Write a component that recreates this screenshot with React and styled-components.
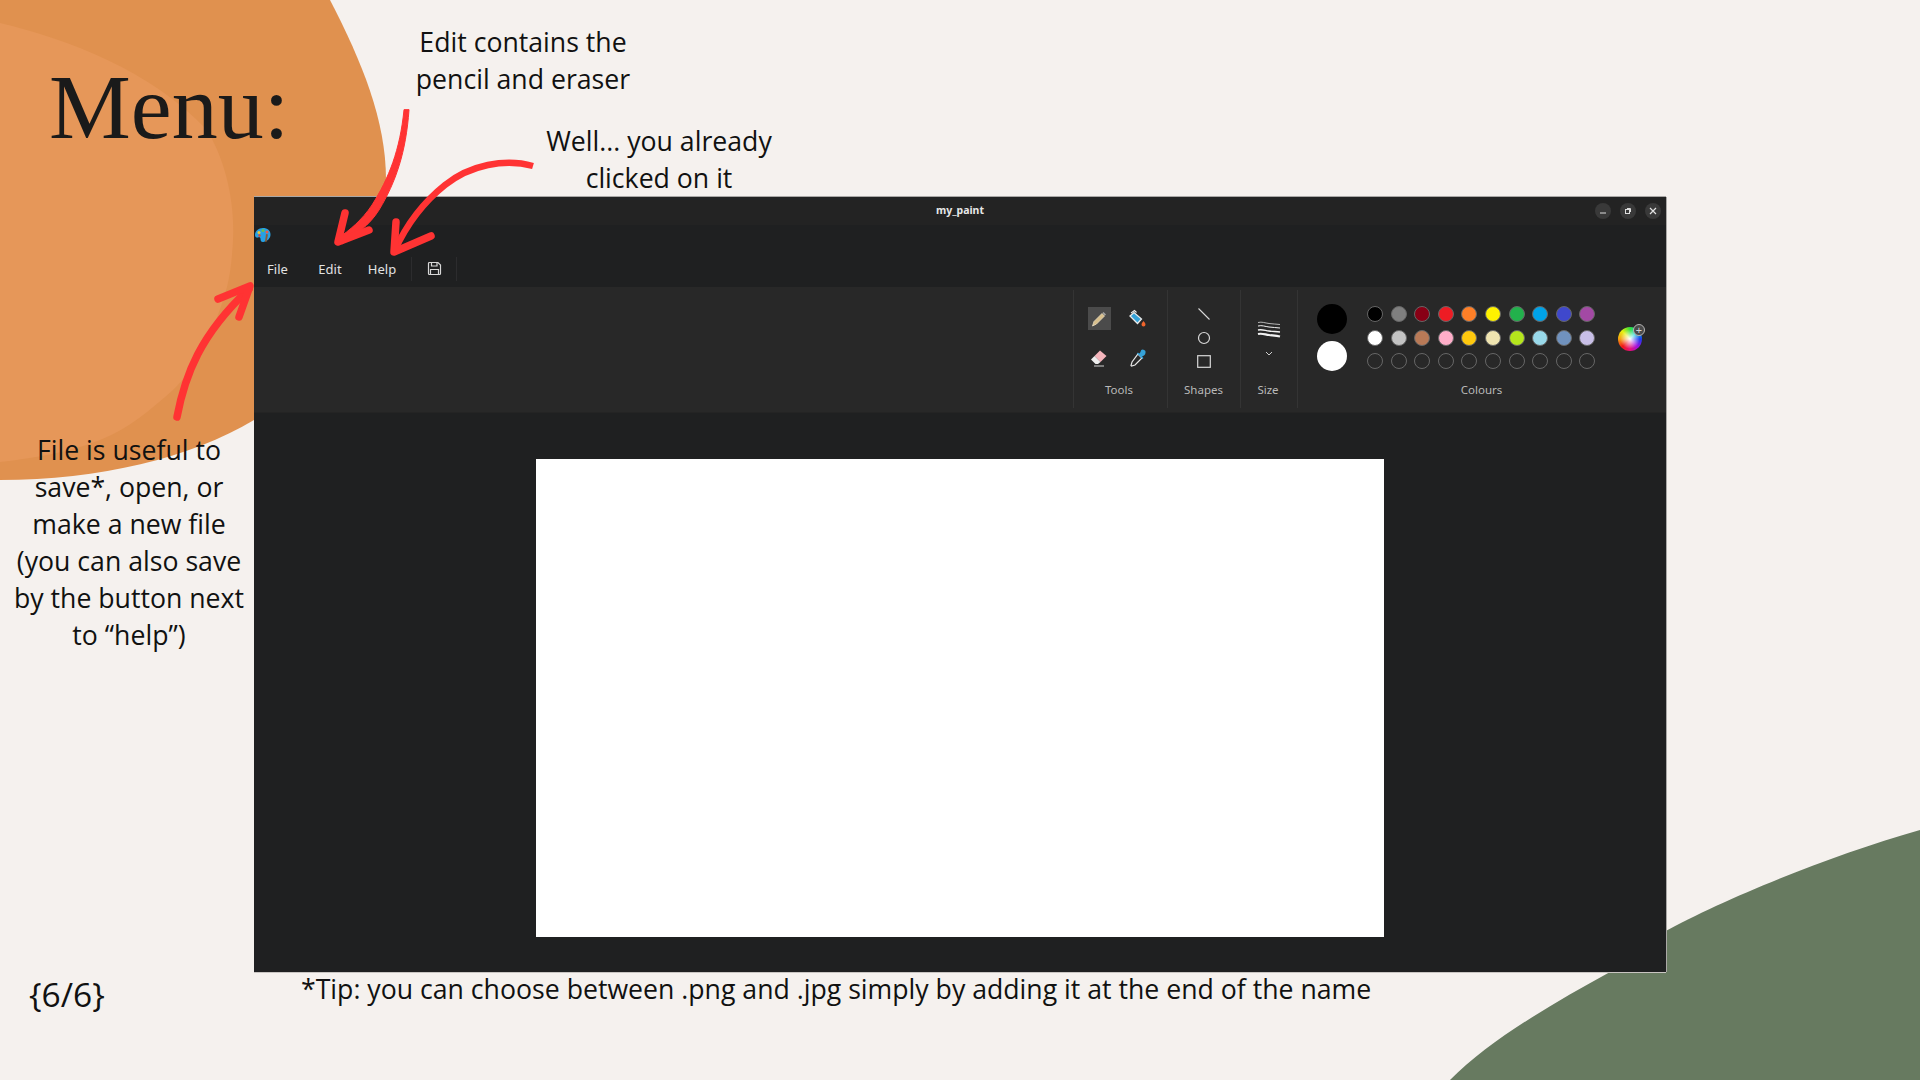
import React from "react";
import styled, { createGlobalStyle } from "styled-components";

const Global = createGlobalStyle`
  html, body {
    margin: 0;
    padding: 0;
    background: #f5f1ee;
  }
`;

const Slide = styled.div`
  position: relative;
  width: 1920px;
  height: 1080px;
  overflow: hidden;
  background: #f5f1ee;
  font-family: "Open Sans", "Noto Sans", sans-serif;
  color: #111;
`;

const Backdrop = styled.svg`
  position: absolute;
  left: 0;
  top: 0;
`;

const Arrows = styled.svg`
  position: absolute;
  left: 0;
  top: 0;
  z-index: 3;
  pointer-events: none;
`;

const Title = styled.h1`
  position: absolute;
  left: 49px;
  top: 49px;
  margin: 0;
  font-family: "Liberation Serif", serif;
  font-weight: 400;
  font-size: 92px;
  line-height: 116px;
  color: #1a1a1a;
`;

const Note = styled.div`
  position: absolute;
  left: ${(p) => p.$cx - 200}px;
  top: ${(p) => p.$top}px;
  width: 400px;
  text-align: center;
  font-size: 26.67px;
  line-height: 37px;
  z-index: 2;
`;

const Tip = styled.div`
  position: absolute;
  left: 301px;
  top: 971px;
  font-size: 26.67px;
  line-height: 36px;
  white-space: nowrap;
`;

const Pager = styled.div`
  position: absolute;
  left: 29px;
  top: 972px;
  font-size: 33.5px;
  line-height: 44px;
`;

const Window = styled.div`
  position: absolute;
  left: 254px;
  top: 197px;
  width: 1412px;
  height: 775px;
  display: flex;
  flex-direction: column;
  background: #1f2021;
  box-shadow: 0 -1px 0 #aaa8a6, 1px 0 0 #aaa8a6, 0 1px 0 #c9c5c2;
  font-family: "Noto Sans", "Open Sans", sans-serif;
`;

const TitleBar = styled.div`
  position: relative;
  height: 28px;
  flex: none;
  display: flex;
  align-items: center;
  justify-content: flex-end;
  gap: 9px;
  padding-right: 5px;
  background: #232323;
`;

const WindowName = styled.span`
  position: absolute;
  left: 0;
  right: 0;
  top: 6px;
  line-height: 15px;
  text-align: center;
  font-size: 10.5px;
  font-weight: 700;
  color: #e8e8e8;
`;

const WindowButton = styled.span`
  width: 16px;
  height: 16px;
  border-radius: 50%;
  background: #393939;
  display: flex;
  align-items: center;
  justify-content: center;
`;

const IconRow = styled.div`
  height: 25px;
  flex: none;
  padding-top: 1px;
  box-sizing: border-box;
  display: flex;
  background: #1f2021;
`;

const MenuRow = styled.div`
  height: 37px;
  flex: none;
  display: flex;
  align-items: center;
  background: #1f2021;
`;

const MenuItem = styled.span`
  width: ${(p) => p.$w}px;
  text-align: center;
  font-size: 13px;
  color: #e2e2e2;
`;

const MenuSep = styled.span`
  width: 1px;
  height: 24px;
  background: #2c2c2e;
  margin-left: ${(p) => p.$ml || 0}px;
`;

const SaveButton = styled.span`
  width: 44px;
  display: flex;
  justify-content: center;
`;

const Ribbon = styled.div`
  height: 125px;
  flex: none;
  display: flex;
  justify-content: flex-end;
  background: #282828;
`;

const Group = styled.div`
  position: relative;
  width: ${(p) => p.$w}px;
  box-sizing: border-box;
  display: flex;
  flex-direction: column;
  align-items: center;
  padding-top: 13px;
  &::before {
    content: "";
    position: absolute;
    left: 0;
    top: 3px;
    bottom: 4px;
    width: 1px;
    background: #343434;
  }
`;

const GroupBody = styled.div`
  height: 76px;
  margin: ${(p) => p.$margin || 0};
  display: flex;
  align-items: center;
  justify-content: center;
`;

const GroupLabel = styled.div`
  margin-top: 6px;
  margin-right: ${(p) => p.$mr || 0}px;
  height: 16px;
  line-height: 16px;
  font-size: 11.5px;
  color: #b9b9b9;
`;

const ToolGrid = styled.div`
  display: grid;
  grid-template-columns: 23px 23px;
  grid-auto-rows: 23px;
  gap: 16px;
`;

const ToolButton = styled.span`
  display: flex;
  align-items: center;
  justify-content: center;
  background: ${(p) => (p.$active ? "#4b4b4b" : "transparent")};
`;

const ShapeStack = styled.div`
  display: flex;
  flex-direction: column;
  align-items: center;
  gap: 10px;
  margin-top: -2px;
`;

const SizeStack = styled.div`
  display: flex;
  flex-direction: column;
  align-items: center;
  gap: 12px;
`;

const ColourRow = styled.div`
  width: 100%;
  height: 76px;
  display: flex;
  align-items: center;
  padding-left: 20px;
  box-sizing: border-box;
`;

const ActiveColours = styled.div`
  display: flex;
  flex-direction: column;
  gap: 7px;
  margin: -2px 20px 0 0;
`;

const ActiveSwatch = styled.span`
  display: block;
  width: 30px;
  height: 30px;
  border-radius: 50%;
  background: ${(p) => p.$c};
`;

const Palette = styled.div`
  display: grid;
  grid-template-columns: repeat(10, 16px);
  grid-auto-rows: 16px;
  gap: 7.4px 7.6px;
  margin-top: -1px;
`;

const Swatch = styled.span`
  display: block;
  box-sizing: border-box;
  width: 16px;
  height: 16px;
  border-radius: 50%;
  border: 1px solid #666;
  background: ${(p) => p.$c || "transparent"};
`;

const Wheel = styled.span`
  position: relative;
  display: block;
  width: 24px;
  height: 24px;
  margin: 2px 0 0 22.6px;
  border-radius: 50%;
  background: radial-gradient(circle, #fff 0%, rgba(255, 255, 255, 0) 58%),
    conic-gradient(#2fe03a, #12d8d8, #1a3cf0, #a010e0, #e81078, #f01818, #f5a010, #e8f010, #2fe03a);
`;

const WheelPlus = styled.span`
  position: absolute;
  right: -3px;
  top: -3px;
  width: 12px;
  height: 12px;
  box-sizing: border-box;
  border-radius: 50%;
  border: 1px solid #b5b5b5;
  background: #4a4a4a;
  color: #d5d5d5;
  font-size: 11px;
  line-height: 9px;
  text-align: center;
`;

const CanvasArea = styled.div`
  flex: 1;
  display: flex;
  justify-content: center;
  padding-top: 46px;
  background: #1f2021;
  border-top: 1px solid #242424;
`;

const Sheet = styled.div`
  width: 848px;
  height: 478px;
  background: #fff;
`;

const COLOURS = [
  "#000000", "#7f7f7f", "#880015", "#ed1c24", "#ff7f27", "#fff200", "#22b14c", "#00a2e8", "#3f48cc", "#a349a4",
  "#ffffff", "#c3c3c3", "#b97a57", "#ffaec9", "#ffc90e", "#efe4b0", "#b5e61d", "#99d9ea", "#7092be", "#c8bfe7",
];

const PaletteIcon = () => (
  <svg width="18" height="18" viewBox="0 0 18 18">
    <path d="M9 2C4.500 2 1 5 1 9c0 2.200 1.800 3 3 2.500s2.500-.5 2.500 1.500c0 2 1 3.500 3 3 4-1 7-3.500 7-7.500C16.500 4.500 13.500 2 9 2z" fill="#26a0e4" />
    <circle cx="5" cy="6.500" r="1.500" fill="#e8c63a" />
    <circle cx="9" cy="4.500" r="1.500" fill="#6cc04a" />
    <circle cx="13" cy="6" r="1.500" fill="#e85a4a" />
    <circle cx="5.500" cy="9.500" r="1.200" fill="#d8463c" />
    <path d="M12 8l2 .5-1.500 7.500-1.500-.5z" fill="#8a5a34" />
  </svg>
);

const SaveIcon = () => (
  <svg width="15" height="15" viewBox="0 0 15 15" fill="none" stroke="#d8d8d8" strokeWidth="1.200">
    <path d="M1.500 2.500a1 1 0 0 1 1-1h8.500l2.500 2.500v8.500a1 1 0 0 1-1 1h-10a1 1 0 0 1-1-1z" />
    <path d="M4.500 1.500v3.500h5.500V1.500M3.500 13.500V8.500h8v5" />
  </svg>
);

const PencilIcon = () => (
  <svg width="18" height="18" viewBox="0 0 18 18">
    <path d="M4 11.500L12 3.500l2.500 2.500-8 8L2.500 16z" fill="#d9c08c" stroke="#e8dcc0" strokeWidth=".8" />
    <path d="M12.500 3l1-1 2.500 2.500-1 1z" fill="#a8a8a8" />
  </svg>
);

const FillIcon = () => (
  <svg width="20" height="20" viewBox="0 0 20 20">
    <path d="M2 7l4-3.500 7.500 6.500-4 4.500z" fill="#35a2d8" stroke="#eaeaea" strokeWidth="1.300" />
    <path d="M3 4l3.500-2.500 2 2" fill="none" stroke="#eaeaea" strokeWidth="1.100" />
    <path d="M15.500 12c1 1.300 2 2.300 2 3.500a2 2 0 0 1-4 0c0-1.200 1-2.200 2-3.500z" fill="#f0642c" />
  </svg>
);

const EraserIcon = () => (
  <svg width="20" height="20" viewBox="0 0 20 20">
    <path d="M11 2.500L17.500 8 11.500 14 5.500 8z" fill="#f5b5bc" />
    <path d="M5.500 8L2 11.500 6.500 16h2.500l2.500-2z" fill="#eeeeee" />
    <path d="M5 18h10" stroke="#cfcfcf" strokeWidth="1" />
  </svg>
);

const DropperIcon = () => (
  <svg width="20" height="20" viewBox="0 0 20 20">
    <path d="M10 6l4 4-7 7-3.500 1L3 17.500l1-3.500z" fill="#2a2a2a" stroke="#e8e8e8" strokeWidth="1.200" />
    <path d="M9 5.500l5.500 5.500 1-1L14 8.500c1.500-.5 3.500-1.500 3.500-3.800a2.500 2.500 0 0 0-5-1c-.3 1-1 1.800-1.700 1.800L10 4.500z" fill="#35a2d8" />
  </svg>
);

const SizeIcon = () => (
  <svg width="24" height="18" viewBox="0 0 24 18" fill="none" stroke="#f2f2f2">
    <path d="M1 1.500c4-1 7 .5 11 1s7 .5 11 1" strokeWidth=".7" />
    <path d="M1 5c4-1 7 .5 11 1s7 .5 11 1" strokeWidth="1" />
    <path d="M1 9c4-1 7 .5 11 1s7 .5 11 1" strokeWidth="1.400" />
    <path d="M1 13c4-1 7 .5 11 1s7 .5 11 1.500" strokeWidth="2.200" />
  </svg>
);

export default function App() {
  return (
    <Slide>
      <Global />
      <Backdrop width="1920" height="1080" viewBox="0 0 1920 1080">
        <path d="M0 0H330C362 62 386 120 386 180C386 300 340 365 254 420C190 458 100 480 0 480Z" fill="#e0914f" />
        <path d="M0 23C70 40 150 70 207 130C225 160 235 200 233 240C232 260 230 275 227 287C215 330 195 370 173 390C150 410 130 428 100 440C70 452 35 458 0 462Z" fill="#e69759" />
        <path d="M1920 830C1780 870 1620 945 1610 972C1550 1005 1490 1040 1450 1080H1920Z" fill="#677a60" />
      </Backdrop>

      <Title>Menu:</Title>

      <Note $cx={523} $top={23}>
        Edit contains the
        <br />
        pencil and eraser
      </Note>
      <Note $cx={659} $top={122}>
        Well... you already
        <br />
        clicked on it
      </Note>
      <Note $cx={129} $top={431}>
        File is useful to
        <br />
        save*, open, or
        <br />
        make a new file
        <br />
        (you can also save
        <br />
        by the button next
        <br />
        to “help”)
      </Note>

      <Window>
        <TitleBar>
          <WindowName>my_paint</WindowName>
          <WindowButton>
            <svg width="8" height="8" viewBox="0 0 8 8"><path d="M1 6h6" stroke="#ddd" strokeWidth="1" /></svg>
          </WindowButton>
          <WindowButton>
            <svg width="8" height="8" viewBox="0 0 8 8" fill="none" stroke="#ddd"><rect x="1.500" y="2.500" width="4" height="4" /><path d="M3 1.500h3.500V5" /></svg>
          </WindowButton>
          <WindowButton>
            <svg width="8" height="8" viewBox="0 0 8 8"><path d="M1 1l6 6M7 1l-6 6" stroke="#e2e2e2" strokeWidth="1.200" /></svg>
          </WindowButton>
        </TitleBar>
        <IconRow>
          <PaletteIcon />
        </IconRow>
        <MenuRow>
          <MenuItem $w={47}>File</MenuItem>
          <MenuItem $w={58}>Edit</MenuItem>
          <MenuItem $w={46}>Help</MenuItem>
          <MenuSep $ml={6} />
          <SaveButton>
            <SaveIcon />
          </SaveButton>
          <MenuSep />
        </MenuRow>
        <Ribbon>
          <Group $w={94}>
            <GroupBody $margin="0 3px 0 0">
              <ToolGrid>
                <ToolButton $active><PencilIcon /></ToolButton>
                <ToolButton><FillIcon /></ToolButton>
                <ToolButton><EraserIcon /></ToolButton>
                <ToolButton><DropperIcon /></ToolButton>
              </ToolGrid>
            </GroupBody>
            <GroupLabel $mr={2}>Tools</GroupLabel>
          </Group>
          <Group $w={73}>
            <GroupBody>
              <ShapeStack>
                <svg width="14" height="14" viewBox="0 0 14 14"><path d="M1.500 1.500l11 11" stroke="#d8d8d8" strokeWidth="1.100" /></svg>
                <svg width="14" height="14" viewBox="0 0 14 14" fill="none"><circle cx="7" cy="7" r="5.500" stroke="#d8d8d8" strokeWidth="1.200" /></svg>
                <svg width="14" height="13" viewBox="0 0 14 13" fill="none"><rect x=".7" y=".7" width="12.600" height="11.600" stroke="#d8d8d8" strokeWidth="1.200" /></svg>
              </ShapeStack>
            </GroupBody>
            <GroupLabel>Shapes</GroupLabel>
          </Group>
          <Group $w={57}>
            <GroupBody>
              <SizeStack>
                <SizeIcon />
                <svg width="8" height="5" viewBox="0 0 8 5" fill="none"><path d="M1 1l3 3 3-3" stroke="#cfcfcf" /></svg>
              </SizeStack>
            </GroupBody>
            <GroupLabel $mr={1}>Size</GroupLabel>
          </Group>
          <Group $w={369}>
            <ColourRow>
              <ActiveColours>
                <ActiveSwatch $c="#000" />
                <ActiveSwatch $c="#fff" />
              </ActiveColours>
              <Palette>
                {COLOURS.map((c, i) => (
                  <Swatch key={i} $c={c} />
                ))}
                {Array.from({ length: 10 }).map((_, i) => (
                  <Swatch key={"empty" + i} />
                ))}
              </Palette>
              <Wheel>
                <WheelPlus>+</WheelPlus>
              </Wheel>
            </ColourRow>
            <GroupLabel>Colours</GroupLabel>
          </Group>
        </Ribbon>
        <CanvasArea>
          <Sheet />
        </CanvasArea>
      </Window>

      <Tip>*Tip: you can choose between .png and .jpg simply by adding it at the end of the name</Tip>
      <Pager>{"{6/6}"}</Pager>

      <Arrows width="1920" height="1080" viewBox="0 0 1920 1080" fill="none" stroke="#ff3333" strokeLinecap="round" strokeLinejoin="round">
        <path d="M404 110C400 150 389 178 372 205C362 220 350 230 337 239L342 244C356 234 369 226 379 210C396 182 406 152 409 110Z" fill="#ff3333" strokeWidth="1" />
        <path d="M345 213L338 242L369 230" strokeWidth="7.500" />
        <path d="M533 166C505 158 470 165 445 185C420 205 405 228 395 250" strokeWidth="6.500" strokeLinecap="butt" />
        <path d="M396 222L394 252L431 236" strokeWidth="7.500" />
        <path d="M177 417C185 375 200 335 249 289" strokeWidth="7.500" />
        <path d="M218 299L250 286L239 317" strokeWidth="7.500" />
      </Arrows>
    </Slide>
  );
}
